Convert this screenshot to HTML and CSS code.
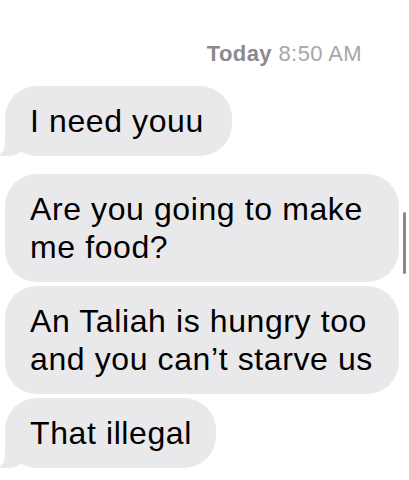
FILE: index.html
```html
<!DOCTYPE html>
<html lang="en">
<head>
  <meta charset="UTF-8">
  <meta name="viewport" content="width=device-width, initial-scale=1.0">
  <title>Messages</title>
  <link rel="stylesheet" href="styles.css">
</head>
<body>
  <div class="thread">
    <p class="stamp"><b>Today</b> 8:50 AM</p>
    <div class="bubble tail first">I need youu</div>
    <div class="bubble group">Are you going to make me food?</div>
    <div class="bubble">An Taliah is hungry too and you can’t starve us</div>
    <div class="bubble tail">That illegal</div>
  </div>
  <div class="scrollbar"></div>
</body>
</html>
```

FILE: styles.css
```css
body {
    margin: 0;
    background: #fff;
    font-family: "Liberation Sans", Arial, sans-serif;
    color: #000;
    height: 480px;
    overflow: hidden;
    position: relative;
}

.thread {
    display: flex;
    flex-direction: column;
    align-items: flex-start;
    padding-top: 41px;
}

.stamp {
    align-self: flex-end;
    margin: 0 47px 19px 0;
    font-size: 22px;
    line-height: 26px;
    letter-spacing: 0.4px;
    color: #a6a6a9;
}

.stamp b {
    font-weight: 600;
    color: #8a8a8e;
}

.bubble {
    position: relative;
    margin: 0 0 4px 5px;
    max-width: 345px;
    padding: 16px 24px 16px 25px;
    background: #e9e9eb;
    border-radius: 32px;
    font-size: 32px;
    line-height: 38px;
    letter-spacing: 0.6px;
}

.bubble.first {
    padding-right: 28px;
}

.bubble.group {
    margin-top: 14px;
}

.bubble.tail::before {
    content: "";
    position: absolute;
    bottom: 0;
    left: -5px;
    width: 26px;
    height: 24px;
    background: #e9e9eb;
    border-bottom-right-radius: 18px 14px;
}

.bubble.tail::after {
    content: "";
    position: absolute;
    bottom: 0;
    left: -24px;
    width: 24px;
    height: 26px;
    background: #fff;
    border-bottom-right-radius: 12px;
}

.scrollbar {
    position: absolute;
    left: 403px;
    top: 212px;
    width: 3px;
    height: 62px;
    border-radius: 2px;
    background: #8a8a8e;
}
```
